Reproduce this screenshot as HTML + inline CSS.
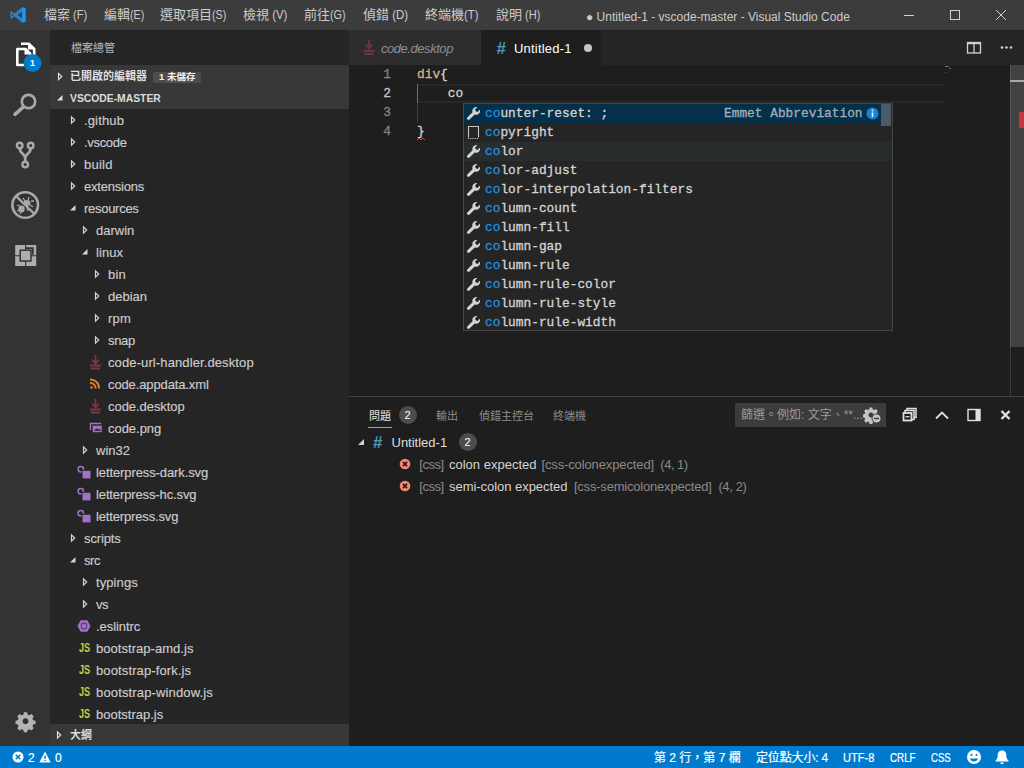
<!DOCTYPE html>
<html lang="zh-Hant">
<head>
<meta charset="utf-8">
<title>Untitled-1 - vscode-master - Visual Studio Code</title>
<style>
*{box-sizing:border-box;margin:0;padding:0}
html,body{width:1024px;height:768px;overflow:hidden;background:#1e1e1e}
body{font-family:"Liberation Sans","Noto Sans CJK TC",sans-serif;font-size:13px;color:#ccc;position:relative}
.abs{position:absolute}
#titlebar{left:0;top:0;width:1024px;height:30px;background:#3c3c3c;color:#ccc}
#titlebar .mi{position:absolute;top:0;height:30px;line-height:30px;white-space:nowrap;font-size:13px}
#activity{left:0;top:30px;width:50px;height:716px;background:#333}
#sidebar{left:50px;top:30px;width:299px;height:716px;background:#252526}
#editor{left:349px;top:30px;width:675px;height:366px;background:#1e1e1e}
#tabs{left:0;top:0;width:675px;height:35px;background:#252526}
#panel{left:349px;top:396px;width:675px;height:350px;background:#1e1e1e;border-top:1px solid #414141}
#status{left:0;top:746px;width:1024px;height:22px;background:#007acc;color:#fff;font-size:12px}
#status span{position:absolute;top:1px;height:22px;line-height:22px;white-space:nowrap;-webkit-text-stroke:0.2px}
.row{position:absolute;left:0;width:299px;height:22px;line-height:22px;white-space:nowrap;color:#ccc;font-size:13px}
.row .lbl{position:absolute;top:0}
.lbl{line-height:22px;white-space:nowrap;color:#ccc;font-size:13px;-webkit-text-stroke:0.15px}
.js{line-height:22px;font-size:12px;font-weight:bold;color:#cbcb41;transform:scaleX(.76);transform-origin:0 50%}
.hd{font-size:11px;font-weight:bold;line-height:22px;color:#ddd;white-space:nowrap}
.sx{display:inline-block;transform-origin:0 50%;white-space:pre}
.mono{font-family:"Liberation Mono","DejaVu Sans Mono",monospace;-webkit-text-stroke:0.3px}

.ln{left:19px;width:23px;text-align:right;font-size:12.830px;line-height:19px;color:#858585}
.cl{left:68px;font-size:12.830px;line-height:19px;color:#d4d4d4;white-space:pre}
#suggest{left:114px;top:73px;width:430px;height:228px;background:#252526;border:1px solid #454545;overflow:hidden}
.sr{position:absolute;left:0;width:428px;height:19px}
.sr.sel{background:#062f4a}
.sr.hov{background:#2a2d2e}
.st{font-size:12.830px;line-height:19px;color:#d4d4d4;white-space:pre}
.st.hl{color:#1a90e0;background:#252526}
.sel .st.hl{background:#062f4a}
.hov .st.hl{background:#2a2d2e}
.det{font-size:12.830px;line-height:19px;color:#9fb0be;white-space:pre}
.pt{font-size:11px;line-height:24px;color:#8c8c8c;white-space:nowrap}
.bdg{width:18px;height:18px;border-radius:9px;background:#4d4d4d;color:#fff;font-size:11px;line-height:18px;text-align:center}
.pr{font-size:13px;line-height:22px;color:#d4d4d4;white-space:nowrap}
.pr.dim,.dim{color:#8a8a8a}
</style>
</head>
<body>
<div id="titlebar" class="abs">
<svg class="abs" style="left:9px;top:6px" width="18" height="18" viewBox="0 0 18 18"><path d="M13.200 1.200L16.600 2.600V15.400L13.200 16.800L5.600 10.400L2.600 12.800L1.400 12.200V5.800L2.600 5.200L5.600 7.600ZM13.200 5.600L8.600 9L13.200 12.400ZM2.900 7.300V10.700L4.600 9Z" fill="#2f7fc4" fill-rule="evenodd"/><path d="M13.200 1.200L16.600 2.600V15.400L13.200 16.800Z" fill="#1a96f0"/></svg>
<span class="mi" style="left:44px">檔案<span class="sx" style="transform:scaleX(0.85)"> (F)</span></span>
<span class="mi" style="left:104px">編輯<span class="sx" style="transform:scaleX(0.82)">(E)</span></span>
<span class="mi" style="left:160px">選取項目<span class="sx" style="transform:scaleX(0.82)">(S)</span></span>
<span class="mi" style="left:243px">檢視<span class="sx" style="transform:scaleX(0.88)"> (V)</span></span>
<span class="mi" style="left:304px">前往<span class="sx" style="transform:scaleX(0.83)">(G)</span></span>
<span class="mi" style="left:363px">偵錯<span class="sx" style="transform:scaleX(0.885)"> (D)</span></span>
<span class="mi" style="left:425px">終端機<span class="sx" style="transform:scaleX(0.867)">(T)</span></span>
<span class="mi" style="left:496px">說明<span class="sx" style="transform:scaleX(0.85)"> (H)</span></span>
<span class="mi" id="wtitle" style="left:586px;top:1.500px;font-size:12px">● Untitled-1 - vscode-master - Visual Studio Code</span>
<svg class="abs" style="left:886px;top:0" width="138" height="30" viewBox="0 0 138 30"><g stroke="#d0d0d0" stroke-width="1" fill="none"><path d="M18 15.5h10"/><rect x="64.5" y="10.5" width="9" height="9"/><path d="M110 10l10 10M120 10l-10 10"/></g></svg>
</div>
<div id="activity" class="abs">
<svg class="abs" style="left:0;top:0" width="50" height="716" viewBox="0 30 50 716">
<!-- files -->
<g fill="none" stroke="#fff" stroke-width="2.600" stroke-linejoin="round">
<path d="M21 43.800h8l5.200 5.200v11.500h-4"/>
<path d="M17.300 49h8.200l4.700 4.700v11.300h-12.900z"/>
</g>
<path d="M28 43.500v6h6zM24.500 49v5.500h5.500z" fill="#fff"/>
<circle cx="32.500" cy="63" r="9" fill="#007acc"/>
<!-- search -->
<g fill="none" stroke="#a9a9a9">
<circle cx="28.500" cy="101.500" r="6.700" stroke-width="2.700"/><path d="M23.300 107l-8.300 7.300" stroke-width="3.600" stroke-linecap="round"/>
</g>
<!-- git -->
<g fill="none" stroke="#a9a9a9" stroke-width="2.400">
<circle cx="19.700" cy="145.500" r="2.800"/><circle cx="30.700" cy="145.500" r="2.800"/><circle cx="25.200" cy="164.500" r="2.800"/>
<path d="M19.700 148.500c0 5 5.500 5.500 5.500 9.500v3.500M30.700 148.500c0 5-5.500 5.500-5.500 9.500" stroke-width="2.800"/>
</g>
<!-- debug -->
<g fill="none" stroke="#a9a9a9">
<circle cx="25.200" cy="205" r="12.800" stroke-width="2.600"/><path d="M16 196l18.500 18" stroke-width="2.400"/>
<ellipse cx="27" cy="203" rx="3.5" ry="3" fill="#a9a9a9" stroke="none"/><ellipse cx="21.5" cy="209" rx="3.2" ry="3.600" fill="#a9a9a9" stroke="none"/>
<path d="M23 198l2 3M29 197l-1 3M31 201h3M30 205l3 2M27 207l1 4M17 205l3 1M17 211l3-1M20 214l1-2" stroke-width="1.300"/>
</g>
<!-- extensions -->
<rect x="15.200" y="245" width="21" height="21" fill="#adadad"/>
<g stroke="#333" fill="none">
<path d="M25.700 245v5M25.700 261v5M15 255.700h5M31 255.700h5.500" stroke-width="1.100"/>
<rect x="20.200" y="250.200" width="10.800" height="10.800" stroke-width="1.500" fill="#adadad"/>
<path d="M25 248.200h7.800v6.500" stroke-width="1.800"/>
</g>
<!-- gear -->
<g transform="translate(25.500 721.300) scale(.9)" fill="#b4b4b4">
<path id="gear" fill-rule="evenodd" d="M-1.800 -10h3.600l.6 2.600 1.900.8 2.300-1.400 2.500 2.500-1.400 2.300.8 1.900 2.600.600v3.600l-2.600.6-.8 1.900 1.400 2.300-2.500 2.500-2.300-1.400-1.900.8-.6 2.600h-3.600l-.6-2.600-1.900-.8-2.300 1.400-2.500-2.500 1.400-2.300-.8-1.900-2.600-.6v-3.600l2.600-.6.8-1.900-1.400-2.300 2.500-2.500 2.300 1.400 1.900-.8z M0 -3.300a3.300 3.300 0 1 0 .001 0z"/>
</g>
</svg>
<span class="abs" style="left:23.500px;top:27px;width:18px;text-align:center;font-size:9px;font-weight:bold;color:#fff;line-height:12px">1</span>
</div>
<div id="sidebar" class="abs">
<span class="abs" style="left:21px;top:8px;font-size:11px;line-height:20px;color:#bbb">檔案總管</span>
<div class="abs" style="left:0;top:35px;width:299px;height:44px;background:#383838"></div>
<div class="abs" style="left:0;top:694px;width:299px;height:22px;background:#383838"></div>
<span class="abs hd" style="left:20px;top:35px">已開啟的編輯器</span>
<span class="abs" style="left:103px;top:41.500px;width:48px;height:11px;background:#4d4d4d;border-radius:2px"></span>
<span class="abs" style="left:109px;top:36px;font-size:9.500px;font-weight:bold;line-height:22px;color:#f0f0f0">1 未儲存</span>
<span class="abs hd sx" style="left:20px;top:57px;transform:scaleX(.94)">VSCODE-MASTER</span>
<span class="abs hd" style="left:20px;top:694px">大綱</span>
<svg class="abs" style="left:0;top:0" width="299" height="716" viewBox="0 0 299 716">
<path d="M8.5 43.4l3.200 3.100-3.200 3.100z" fill="none" stroke="#ddd" stroke-width="1.200"/><path d="M12.5 65v5.500h-5.500z" fill="#ddd"/><path d="M7.5 701.9l3.200 3.100-3.200 3.100z" fill="none" stroke="#ddd" stroke-width="1.200"/>
<path d="M21.5 86.9l3.200 3.100-3.200 3.100z" fill="none" stroke="#d4d4d4" stroke-width="1.200"/><path d="M21.5 108.9l3.200 3.100-3.200 3.100z" fill="none" stroke="#d4d4d4" stroke-width="1.200"/><path d="M21.5 130.9l3.200 3.100-3.200 3.100z" fill="none" stroke="#d4d4d4" stroke-width="1.200"/><path d="M21.5 152.9l3.200 3.100-3.200 3.100z" fill="none" stroke="#d4d4d4" stroke-width="1.200"/><path d="M25.5 175v5.500h-5.500z" fill="#d4d4d4"/><path d="M33.5 196.9l3.200 3.100-3.200 3.100z" fill="none" stroke="#d4d4d4" stroke-width="1.200"/><path d="M37.5 219v5.500h-5.500z" fill="#d4d4d4"/><path d="M45.5 240.9l3.200 3.100-3.200 3.100z" fill="none" stroke="#d4d4d4" stroke-width="1.200"/><path d="M45.5 262.9l3.200 3.100-3.200 3.100z" fill="none" stroke="#d4d4d4" stroke-width="1.200"/><path d="M45.5 284.9l3.200 3.100-3.200 3.100z" fill="none" stroke="#d4d4d4" stroke-width="1.200"/><path d="M45.5 306.9l3.200 3.100-3.200 3.100z" fill="none" stroke="#d4d4d4" stroke-width="1.200"/><g fill="none" stroke="#7d3444" stroke-width="1.800"><path d="M45.5 325v8M42 329.5l3.500 3.800 3.500-3.800M40 335.5h11M41 338.5h9"/></g><g fill="none" stroke="#e37933" stroke-width="1.900"><circle cx="41.5" cy="357.5" r="1.300" fill="#e37933" stroke="none"/><path d="M40 353a5 5 0 0 1 5.500 5.500M40 349.5a8.500 8.500 0 0 1 9 9"/></g><g fill="none" stroke="#7d3444" stroke-width="1.800"><path d="M45.5 369v8M42 373.5l3.500 3.800 3.500-3.800M40 379.5h11M41 382.5h9"/></g><g fill="none" stroke="#a074c4" stroke-width="1.400"><path d="M40.5 400v-6.500h10.500"/><rect x="42.7" y="395.7" width="9" height="6.500" fill="#a074c4" stroke="none"/><path d="M44 401l2.500-3 1.500 1.500 1.500-1 1.500 2.500z" fill="#3a2a4a" stroke="none"/></g><path d="M33.5 416.9l3.200 3.100-3.200 3.100z" fill="none" stroke="#d4d4d4" stroke-width="1.200"/><g><circle cx="30.8" cy="439.3" r="2.700" fill="none" stroke="#a074c4" stroke-width="1.500"/><rect x="31.5" y="439.8" width="9.200" height="8.200" fill="#252526"/><rect x="32.5" y="440.8" width="8" height="7.600" fill="#a074c4"/></g><g><circle cx="30.8" cy="461.3" r="2.700" fill="none" stroke="#a074c4" stroke-width="1.500"/><rect x="31.5" y="461.8" width="9.200" height="8.200" fill="#252526"/><rect x="32.5" y="462.8" width="8" height="7.600" fill="#a074c4"/></g><g><circle cx="30.8" cy="483.3" r="2.700" fill="none" stroke="#a074c4" stroke-width="1.500"/><rect x="31.5" y="483.8" width="9.200" height="8.200" fill="#252526"/><rect x="32.5" y="484.8" width="8" height="7.600" fill="#a074c4"/></g><path d="M21.5 504.9l3.200 3.100-3.200 3.100z" fill="none" stroke="#d4d4d4" stroke-width="1.200"/><path d="M25.5 527v5.500h-5.500z" fill="#d4d4d4"/><path d="M33.5 548.9l3.200 3.100-3.200 3.100z" fill="none" stroke="#d4d4d4" stroke-width="1.200"/><path d="M33.5 570.9l3.200 3.100-3.200 3.100z" fill="none" stroke="#d4d4d4" stroke-width="1.200"/><g><path d="M30.7 590.2h6.600l3.300 5.800-3.300 5.800h-6.600l-3.300-5.800z" fill="#a074c4"/><circle cx="34" cy="596" r="3.400" fill="#5a3f73"/><circle cx="34" cy="596" r="2.300" fill="#a074c4"/></g>
</svg>
<span class="abs lbl" style="left:34px;top:80px;letter-spacing:0.14px">.github</span><span class="abs lbl" style="left:34px;top:102px;letter-spacing:-0.32px">.vscode</span><span class="abs lbl" style="left:34px;top:124px;letter-spacing:0.23px">build</span><span class="abs lbl" style="left:34px;top:146px;letter-spacing:-0.22px">extensions</span><span class="abs lbl" style="left:34px;top:168px;letter-spacing:-0.28px">resources</span><span class="abs lbl" style="left:46px;top:190px">darwin</span><span class="abs lbl" style="left:46px;top:212px;letter-spacing:0.05px">linux</span><span class="abs lbl" style="left:58px;top:234px;letter-spacing:0.25px">bin</span><span class="abs lbl" style="left:58px;top:256px">debian</span><span class="abs lbl" style="left:58px;top:278px;letter-spacing:0.2px">rpm</span><span class="abs lbl" style="left:58px;top:300px;letter-spacing:-0.33px">snap</span><span class="abs lbl" style="left:58px;top:322px;letter-spacing:0.11px">code-url-handler.desktop</span><span class="abs lbl" style="left:58px;top:344px;letter-spacing:-0.12px">code.appdata.xml</span><span class="abs lbl" style="left:58px;top:366px;letter-spacing:-0.05px">code.desktop</span><span class="abs lbl" style="left:58px;top:388px;letter-spacing:-0.03px">code.png</span><span class="abs lbl" style="left:46px;top:410px">win32</span><span class="abs lbl" style="left:46px;top:432px;letter-spacing:-0.1px">letterpress-dark.svg</span><span class="abs lbl" style="left:46px;top:454px;letter-spacing:-0.12px">letterpress-hc.svg</span><span class="abs lbl" style="left:46px;top:476px;letter-spacing:-0.15px">letterpress.svg</span><span class="abs lbl" style="left:34px;top:498px;letter-spacing:-0.12px">scripts</span><span class="abs lbl" style="left:34px;top:520px;letter-spacing:-0.38px">src</span><span class="abs lbl" style="left:46px;top:542px;letter-spacing:0.09px">typings</span><span class="abs lbl" style="left:46px;top:564px;letter-spacing:-0.5px">vs</span><span class="abs lbl" style="left:46px;top:586px;letter-spacing:-0.07px">.eslintrc</span><span class="abs js" style="left:28.7px;top:607px">JS</span><span class="abs lbl" style="left:46px;top:608px;letter-spacing:0.04px">bootstrap-amd.js</span><span class="abs js" style="left:28.7px;top:629px">JS</span><span class="abs lbl" style="left:46px;top:630px;letter-spacing:0.12px">bootstrap-fork.js</span><span class="abs js" style="left:28.7px;top:651px">JS</span><span class="abs lbl" style="left:46px;top:652px;letter-spacing:0.15px">bootstrap-window.js</span><span class="abs js" style="left:28.7px;top:673px">JS</span><span class="abs lbl" style="left:46px;top:674px">bootstrap.js</span>
</div>
<div id="editor" class="abs">
<div id="tabs" class="abs">
<div class="abs" style="left:0;top:0;width:132px;height:35px;background:#2d2d2d"></div>
<div class="abs" style="left:132px;top:0;width:120px;height:35px;background:#1e1e1e"></div>
<svg class="abs" style="left:13px;top:9px" width="14" height="17" viewBox="0 0 14 17"><g fill="none" stroke="#703244" stroke-width="1.800"><path d="M7 1v8M3.500 5.500l3.500 3.800 3.500-3.800M1.500 12h11M2.500 15h9"/></g></svg>
<span class="abs" style="left:32px;top:1px;line-height:35px;font-style:italic;color:#8f8f8f;font-size:13px;white-space:nowrap;letter-spacing:-0.45px">code.desktop</span>
<span class="abs" style="left:147.500px;top:1px;line-height:35px;color:#519aba;font-size:17px;font-weight:bold">#</span>
<span class="abs" style="left:165px;top:1px;line-height:35px;color:#fff;font-size:13px;white-space:nowrap;letter-spacing:0.2px">Untitled-1</span>
<span class="abs" style="left:234.500px;top:13.500px;width:8px;height:8px;border-radius:50%;background:#c5c5c5"></span>
<svg class="abs" style="left:610px;top:8px" width="60" height="20" viewBox="0 0 60 20"><rect x="8.500" y="4.500" width="13" height="10.500" fill="none" stroke="#d0d0d0" stroke-width="1.300"/><path d="M15 4.500v10.500M8 5.500h14" stroke="#d0d0d0" stroke-width="1.300"/><circle cx="43" cy="9.500" r="1.300" fill="#d0d0d0"/><circle cx="47.500" cy="9.500" r="1.300" fill="#d0d0d0"/><circle cx="52" cy="9.500" r="1.300" fill="#d0d0d0"/></svg>
</div>
<div class="abs" style="left:68px;top:54px;width:528px;height:19px;border-top:2px solid #282828;border-bottom:2px solid #282828"></div>
<div class="abs" style="left:68px;top:54px;width:1px;height:19px;background:#707070"></div>
<div class="abs" style="left:68px;top:73px;width:1px;height:19px;background:#404040"></div>
<span class="abs mono ln" style="top:35px">1</span><span class="abs mono ln" style="top:54px;color:#c6c6c6">2</span><span class="abs mono ln" style="top:73px">3</span><span class="abs mono ln" style="top:92px">4</span>
<span class="abs mono cl" style="top:35px"><span style="color:#d7ba7d">div</span>{</span>
<span class="abs mono cl" style="top:54px">    co</span>
<span class="abs mono cl" style="top:92px">}</span>
<svg class="abs" style="left:68px;top:107px" width="10" height="4" viewBox="0 0 10 4"><path d="M0 3l2-2 2 2 2-2 2 2" fill="none" stroke="#e04040" stroke-width="1"/></svg>
<div class="abs" style="left:661px;top:35px;width:14px;height:331px;background:#1e1e1e;border-left:1px solid #3a3a3a"></div>
<div class="abs" style="left:661px;top:35px;width:14px;height:282px;background:#424242;border-left:1px solid #555"></div>
<div class="abs" style="left:661px;top:50px;width:14px;height:2px;background:#a8a8a8"></div>
<div class="abs" style="left:670px;top:82px;width:5px;height:16px;background:#c8343c"></div>
<div class="abs" style="left:596px;top:36px;width:4px;height:1px;background:#77705c"></div><div class="abs" style="left:600px;top:38px;width:2px;height:1px;background:#666"></div><div class="abs" style="left:596px;top:42px;width:1px;height:1px;background:#666"></div>
<div id="suggest" class="abs">
<div class="sr sel" style="top:0px"><svg class="abs" style="left:2px;top:2px" width="15" height="15" viewBox="0 0 15 15"><path d="M10.200 1a3.900 3.900 0 0 0-3.700 5.200L1.300 11.400a1.350 1.350 0 0 0 0 1.900l.3.300a1.350 1.350 0 0 0 1.900 0L8.700 8.400A3.900 3.900 0 0 0 13.900 3.600L11.600 5.900 9.700 5.300 9.100 3.400 11.400 1.100A3.900 3.900 0 0 0 10.200 1z" fill="#d4d4d4"/></svg><span class="abs mono st" style="left:21px;top:0">counter-reset: ;</span><span class="abs mono st hl" style="left:21px;top:0">co</span><span class="abs mono det" style="left:260px;top:0">Emmet Abbreviation</span><svg class="abs" style="left:402px;top:3px" width="13" height="13" viewBox="0 0 13 13"><circle cx="6.500" cy="6.500" r="6" fill="#1a85d6"/><path d="M6.500 5.500v4.500" stroke="#fff" stroke-width="1.500"/><circle cx="6.500" cy="3.500" r=".9" fill="#fff"/></svg></div><div class="sr" style="top:19px"><svg class="abs" style="left:3px;top:2px" width="14" height="15" viewBox="0 0 14 15"><path d="M1.500 12.500V1.500h10v11" fill="none" stroke="#c5c5c5" stroke-width="1.100"/><path d="M1 13.500h11" stroke="#c5c5c5" stroke-width="1.100" stroke-dasharray="1.200 1"/></svg><span class="abs mono st" style="left:21px;top:0">copyright</span><span class="abs mono st hl" style="left:21px;top:0">co</span></div><div class="sr hov" style="top:38px"><svg class="abs" style="left:2px;top:2px" width="15" height="15" viewBox="0 0 15 15"><path d="M10.200 1a3.900 3.900 0 0 0-3.700 5.200L1.300 11.400a1.350 1.350 0 0 0 0 1.900l.3.300a1.350 1.350 0 0 0 1.900 0L8.700 8.400A3.900 3.900 0 0 0 13.900 3.600L11.600 5.900 9.700 5.300 9.100 3.400 11.400 1.100A3.900 3.900 0 0 0 10.200 1z" fill="#d4d4d4"/></svg><span class="abs mono st" style="left:21px;top:0">color</span><span class="abs mono st hl" style="left:21px;top:0">co</span></div><div class="sr" style="top:57px"><svg class="abs" style="left:2px;top:2px" width="15" height="15" viewBox="0 0 15 15"><path d="M10.200 1a3.900 3.900 0 0 0-3.700 5.200L1.300 11.400a1.350 1.350 0 0 0 0 1.900l.3.300a1.350 1.350 0 0 0 1.900 0L8.700 8.400A3.900 3.900 0 0 0 13.900 3.600L11.600 5.900 9.700 5.300 9.100 3.400 11.400 1.100A3.900 3.900 0 0 0 10.200 1z" fill="#d4d4d4"/></svg><span class="abs mono st" style="left:21px;top:0">color-adjust</span><span class="abs mono st hl" style="left:21px;top:0">co</span></div><div class="sr" style="top:76px"><svg class="abs" style="left:2px;top:2px" width="15" height="15" viewBox="0 0 15 15"><path d="M10.200 1a3.900 3.900 0 0 0-3.700 5.200L1.300 11.400a1.350 1.350 0 0 0 0 1.900l.3.300a1.350 1.350 0 0 0 1.900 0L8.700 8.400A3.900 3.900 0 0 0 13.900 3.600L11.600 5.900 9.700 5.300 9.100 3.400 11.400 1.100A3.900 3.900 0 0 0 10.200 1z" fill="#d4d4d4"/></svg><span class="abs mono st" style="left:21px;top:0">color-interpolation-filters</span><span class="abs mono st hl" style="left:21px;top:0">co</span></div><div class="sr" style="top:95px"><svg class="abs" style="left:2px;top:2px" width="15" height="15" viewBox="0 0 15 15"><path d="M10.200 1a3.900 3.900 0 0 0-3.700 5.200L1.300 11.400a1.350 1.350 0 0 0 0 1.900l.3.300a1.350 1.350 0 0 0 1.900 0L8.700 8.400A3.900 3.900 0 0 0 13.900 3.600L11.600 5.900 9.700 5.300 9.100 3.400 11.400 1.100A3.900 3.900 0 0 0 10.200 1z" fill="#d4d4d4"/></svg><span class="abs mono st" style="left:21px;top:0">column-count</span><span class="abs mono st hl" style="left:21px;top:0">co</span></div><div class="sr" style="top:114px"><svg class="abs" style="left:2px;top:2px" width="15" height="15" viewBox="0 0 15 15"><path d="M10.200 1a3.900 3.900 0 0 0-3.700 5.200L1.300 11.400a1.350 1.350 0 0 0 0 1.900l.3.300a1.350 1.350 0 0 0 1.900 0L8.700 8.400A3.900 3.900 0 0 0 13.900 3.600L11.600 5.900 9.700 5.300 9.100 3.400 11.400 1.100A3.900 3.900 0 0 0 10.200 1z" fill="#d4d4d4"/></svg><span class="abs mono st" style="left:21px;top:0">column-fill</span><span class="abs mono st hl" style="left:21px;top:0">co</span></div><div class="sr" style="top:133px"><svg class="abs" style="left:2px;top:2px" width="15" height="15" viewBox="0 0 15 15"><path d="M10.200 1a3.900 3.900 0 0 0-3.700 5.200L1.300 11.400a1.350 1.350 0 0 0 0 1.900l.3.300a1.350 1.350 0 0 0 1.900 0L8.700 8.400A3.900 3.900 0 0 0 13.900 3.600L11.600 5.900 9.700 5.300 9.100 3.400 11.400 1.100A3.900 3.900 0 0 0 10.200 1z" fill="#d4d4d4"/></svg><span class="abs mono st" style="left:21px;top:0">column-gap</span><span class="abs mono st hl" style="left:21px;top:0">co</span></div><div class="sr" style="top:152px"><svg class="abs" style="left:2px;top:2px" width="15" height="15" viewBox="0 0 15 15"><path d="M10.200 1a3.900 3.900 0 0 0-3.700 5.200L1.300 11.400a1.350 1.350 0 0 0 0 1.900l.3.300a1.350 1.350 0 0 0 1.900 0L8.700 8.400A3.900 3.900 0 0 0 13.900 3.600L11.600 5.900 9.700 5.300 9.100 3.400 11.400 1.100A3.900 3.900 0 0 0 10.200 1z" fill="#d4d4d4"/></svg><span class="abs mono st" style="left:21px;top:0">column-rule</span><span class="abs mono st hl" style="left:21px;top:0">co</span></div><div class="sr" style="top:171px"><svg class="abs" style="left:2px;top:2px" width="15" height="15" viewBox="0 0 15 15"><path d="M10.200 1a3.900 3.900 0 0 0-3.700 5.200L1.300 11.400a1.350 1.350 0 0 0 0 1.900l.3.300a1.350 1.350 0 0 0 1.900 0L8.700 8.400A3.900 3.900 0 0 0 13.900 3.600L11.600 5.900 9.700 5.300 9.100 3.400 11.400 1.100A3.900 3.900 0 0 0 10.200 1z" fill="#d4d4d4"/></svg><span class="abs mono st" style="left:21px;top:0">column-rule-color</span><span class="abs mono st hl" style="left:21px;top:0">co</span></div><div class="sr" style="top:190px"><svg class="abs" style="left:2px;top:2px" width="15" height="15" viewBox="0 0 15 15"><path d="M10.200 1a3.900 3.900 0 0 0-3.700 5.200L1.300 11.400a1.350 1.350 0 0 0 0 1.900l.3.300a1.350 1.350 0 0 0 1.900 0L8.700 8.400A3.900 3.900 0 0 0 13.900 3.600L11.600 5.900 9.700 5.300 9.100 3.400 11.400 1.100A3.900 3.900 0 0 0 10.200 1z" fill="#d4d4d4"/></svg><span class="abs mono st" style="left:21px;top:0">column-rule-style</span><span class="abs mono st hl" style="left:21px;top:0">co</span></div><div class="sr" style="top:209px"><svg class="abs" style="left:2px;top:2px" width="15" height="15" viewBox="0 0 15 15"><path d="M10.200 1a3.900 3.900 0 0 0-3.700 5.200L1.300 11.400a1.350 1.350 0 0 0 0 1.900l.3.300a1.350 1.350 0 0 0 1.900 0L8.700 8.400A3.900 3.900 0 0 0 13.900 3.600L11.600 5.900 9.700 5.300 9.100 3.400 11.400 1.100A3.900 3.900 0 0 0 10.200 1z" fill="#d4d4d4"/></svg><span class="abs mono st" style="left:21px;top:0">column-rule-width</span><span class="abs mono st hl" style="left:21px;top:0">co</span></div>
<div class="abs" style="left:417px;top:0;width:10px;height:22px;background:#4a5a68"></div>
</div>
</div>
<div id="panel" class="abs">
<span class="abs pt" style="left:20px;top:7px;color:#e7e7e7">問題</span>
<div class="abs" style="left:19px;top:30px;width:24px;height:1px;background:#a0a0a0"></div>
<span class="abs bdg" style="left:49.500px;top:9px">2</span>
<span class="abs pt" style="left:87px;top:7px">輸出</span>
<span class="abs pt" style="left:130px;top:7px">偵錯主控台</span>
<span class="abs pt" style="left:204px;top:7px">終端機</span>
<div class="abs" style="left:386px;top:6px;width:151px;height:24px;background:#3c3c3c"></div>
<span class="abs" style="left:392px;top:6px;line-height:24px;font-size:12px;color:#9a9a9a;white-space:nowrap">篩選。例如: 文字、**...</span>
<svg class="abs" style="left:514px;top:9px" width="19" height="18" viewBox="0 0 19 18"><g transform="translate(8 9) scale(.75)" fill="#c5c5c5"><path fill-rule="evenodd" d="M-1.800 -10h3.600l.6 2.600 1.900.8 2.300-1.400 2.500 2.500-1.400 2.300.8 1.900 2.600.600v3.600l-2.600.6-.8 1.900 1.400 2.300-2.500 2.500-2.300-1.400-1.900.8-.6 2.600h-3.600l-.6-2.600-1.900-.8-2.300 1.400-2.500-2.500 1.400-2.300-.8-1.900-2.600-.6v-3.600l2.600-.6.8-1.900-1.400-2.300 2.500-2.500 2.300 1.400 1.900-.8z M0 -3.300a3.300 3.300 0 1 0 .001 0z"/></g><circle cx="13.500" cy="12.500" r="4.500" fill="#c5c5c5" stroke="#3c3c3c" stroke-width="1"/><path d="M11 12.500h5" stroke="#3c3c3c" stroke-width="1.500"/></svg>
<svg class="abs" style="left:550px;top:9px" width="120" height="18" viewBox="0 0 120 18"><g fill="none" stroke="#e0e0e0" stroke-width="1.500"><path d="M8 4.500v-2h9v9h-2M6 6.500v-2h9v9h-2"/><rect x="4.500" y="7" width="8" height="7.500" stroke-width="1.800"/><path d="M6.500 10.700h4" stroke-width="1.300"/>
<path d="M37 12.500l6-6 6 6" stroke-width="1.800"/>
<rect x="69" y="3.500" width="12" height="11" stroke-width="1.400"/></g><rect x="76.500" y="3.500" width="4.500" height="11" fill="#e0e0e0"/><path d="M102.500 5l8 8M110.500 5l-8 8" stroke="#e0e0e0" stroke-width="2.400"/></svg>
<svg class="abs" style="left:8px;top:41px" width="8" height="8" viewBox="0 0 8 8"><path d="M7 1v6h-6z" fill="#d0d0d0"/></svg>
<span class="abs" style="left:24px;top:35px;line-height:22px;color:#519aba;font-size:17px;font-weight:bold">#</span>
<span class="abs pr" style="left:42.500px;top:35px;color:#ddd">Untitled-1</span>
<span class="abs bdg" style="left:109.500px;top:36px">2</span>
<svg class="abs" style="left:50px;top:61px" width="12" height="12" viewBox="0 0 12 12"><circle cx="6" cy="6" r="5.300" fill="#f48771"/><path d="M3.900 3.900l4.200 4.200M8.100 3.900l-4.200 4.200" stroke="#2a1a1a" stroke-width="1.700"/></svg>
<span class="abs pr dim" style="left:70.300px;top:57px;letter-spacing:-0.47px">[css]</span><span class="abs pr" style="left:100px;top:57px">colon expected</span><span class="abs pr dim" style="left:192.400px;top:57px;letter-spacing:-0.12px">[css-colonexpected]</span><span class="abs pr dim" style="left:311.300px;top:57px;letter-spacing:-0.49px">(4, 1)</span>
<svg class="abs" style="left:50px;top:83px" width="12" height="12" viewBox="0 0 12 12"><circle cx="6" cy="6" r="5.300" fill="#f48771"/><path d="M3.900 3.900l4.200 4.200M8.100 3.900l-4.200 4.200" stroke="#2a1a1a" stroke-width="1.700"/></svg>
<span class="abs pr dim" style="left:70.300px;top:79px;letter-spacing:-0.47px">[css]</span><span class="abs pr" style="left:100px;top:79px;letter-spacing:-0.04px">semi-colon expected</span><span class="abs pr dim" style="left:224.900px;top:79px;letter-spacing:-0.2px">[css-semicolonexpected]</span><span class="abs pr dim" style="left:369.400px;top:79px;letter-spacing:-0.37px">(4, 2)</span>
</div>
<div id="status" class="abs">
<svg class="abs" style="left:12px;top:5px" width="12" height="12" viewBox="0 0 12 12"><circle cx="6" cy="6" r="5.500" fill="#fff"/><path d="M3.800 3.800l4.400 4.400M8.200 3.800l-4.400 4.400" stroke="#007acc" stroke-width="1.600"/></svg>
<span style="left:28px">2</span>
<svg class="abs" style="left:39px;top:5px" width="12" height="12" viewBox="0 0 12 12"><path d="M6 .5l5.700 11h-11.400z" fill="#fff"/><path d="M6 4.500v3.500" stroke="#007acc" stroke-width="1.400"/><circle cx="6" cy="9.600" r=".8" fill="#007acc"/></svg>
<span style="left:55px">0</span>
<span style="left:654px">第 2 行，第 7 欄</span>
<span style="left:756px;letter-spacing:-0.15px">定位點大小: 4</span>
<span class="sx" style="left:843px;transform:scaleX(.92)">UTF-8</span>
<span class="sx" style="left:889.500px;transform:scaleX(.815)">CRLF</span>
<span class="sx" style="left:930.500px;transform:scaleX(.8)">CSS</span>
<svg class="abs" style="left:966px;top:3px" width="16" height="16" viewBox="0 0 16 16"><circle cx="8" cy="8" r="7" fill="#fff"/><circle cx="5.500" cy="6" r="1.100" fill="#007acc"/><circle cx="10.500" cy="6" r="1.100" fill="#007acc"/><path d="M4 9.500a4.200 4.200 0 0 0 8 0z" fill="#007acc"/></svg>
<svg class="abs" style="left:994px;top:3px" width="16" height="16" viewBox="0 0 16 16"><path d="M8 1.500c-3 0-4.300 2.200-4.300 5 0 3-1.200 4-2.200 5v1h13v-1c-1-1-2.200-2-2.200-5 0-2.800-1.300-5-4.300-5zM6.300 13.500a1.700 1.700 0 0 0 3.400 0z" fill="#fff"/></svg>
</div>
</body>
</html>
